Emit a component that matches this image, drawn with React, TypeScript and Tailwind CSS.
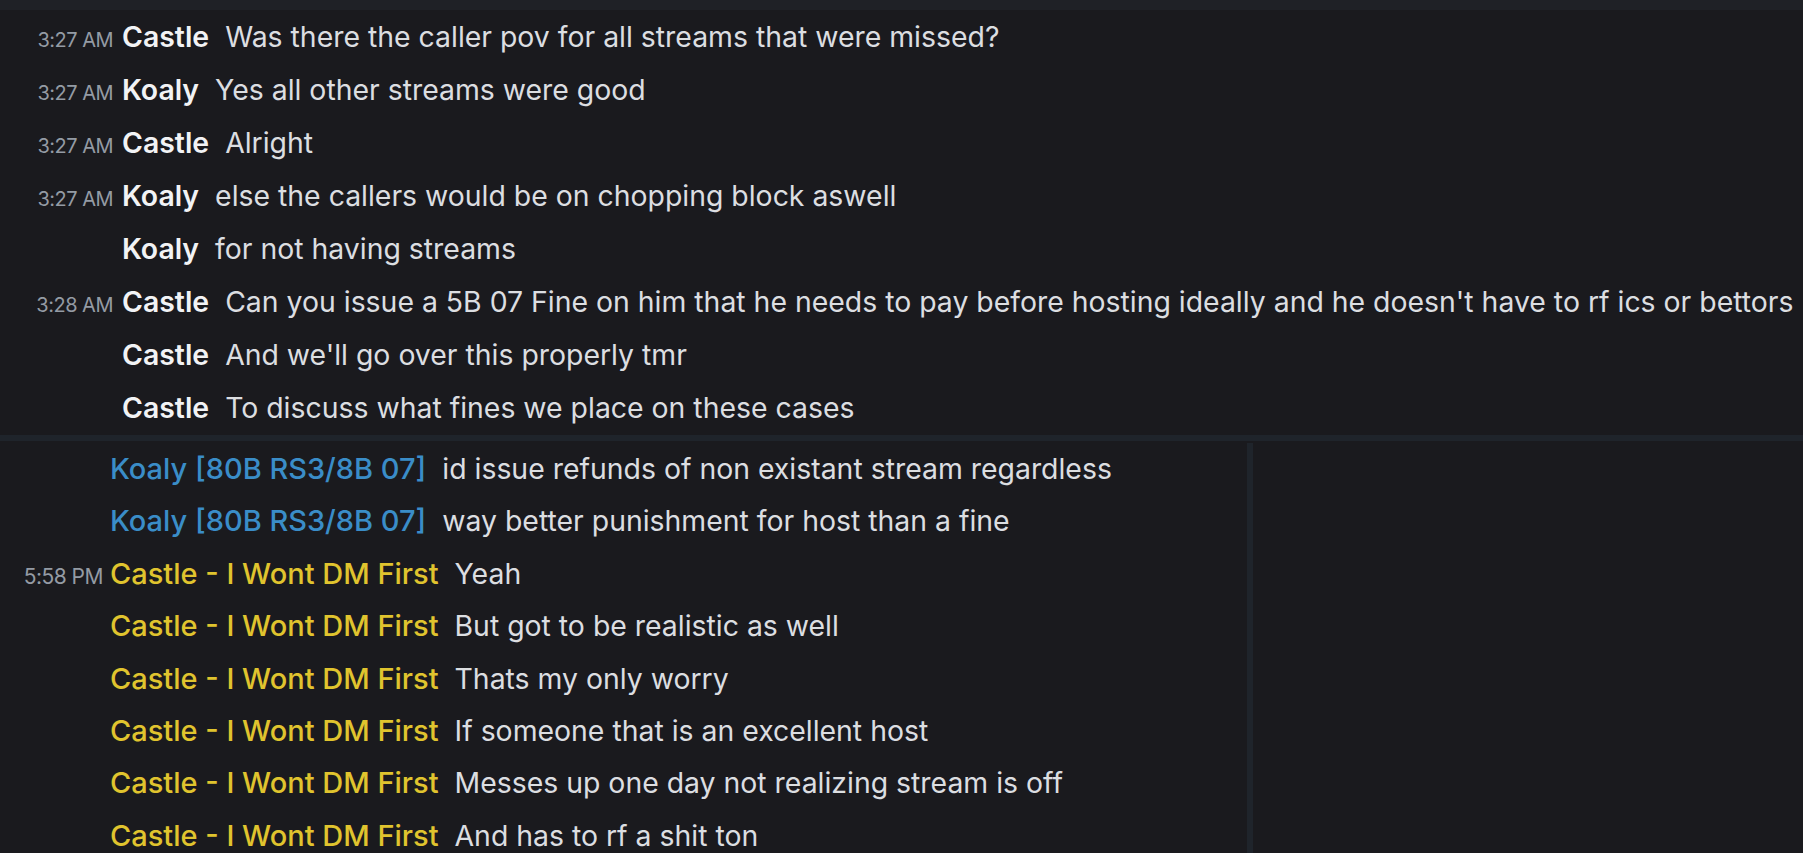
const topRows = [
  { time: "3:27 AM", name: "Castle", text: "Was there the caller pov for all streams that were missed?" },
  { time: "3:27 AM", name: "Koaly", text: "Yes all other streams were good" },
  { time: "3:27 AM", name: "Castle", text: "Alright" },
  { time: "3:27 AM", name: "Koaly", text: "else the callers would be on chopping block aswell" },
  { time: "", name: "Koaly", text: "for not having streams" },
  {
    time: "3:28 AM",
    name: "Castle",
    text: "Can you issue a 5B 07 Fine on him that he needs to pay before hosting ideally and he doesn't have to rf ics or bettors",
  },
  { time: "", name: "Castle", text: "And we'll go over this properly tmr" },
  { time: "", name: "Castle", text: "To discuss what fines we place on these cases" },
];

const castle = "Castle - I Wont DM First";
const koaly = "Koaly [80B RS3/8B 07]";

const bottomRows = [
  { time: "", name: koaly, color: "blue", text: "id issue refunds of non existant stream regardless" },
  { time: "", name: koaly, color: "blue", text: "way better punishment for host than a fine" },
  { time: "5:58 PM", name: castle, color: "gold", text: "Yeah" },
  { time: "", name: castle, color: "gold", text: "But got to be realistic as well" },
  { time: "", name: castle, color: "gold", text: "Thats my only worry" },
  { time: "", name: castle, color: "gold", text: "If someone that is an excellent host" },
  { time: "", name: castle, color: "gold", text: "Messes up one day not realizing stream is off" },
  { time: "", name: castle, color: "gold", text: "And has to rf a shit ton" },
];

export default function App() {
  return (
    <div className="w-full h-[853px] overflow-hidden bg-[#1a1a1e] font-['Inter',sans-serif] whitespace-nowrap">
      {/* hover strip at the very top */}
      <div className="h-[10px] bg-[#1f2126]" />

      {/* first capture */}
      <div className="h-[425px]">
        {topRows.map((row, i) => (
          <div key={i} className="flex items-baseline h-[53px] leading-[53px]">
            <span className="w-[113px] text-right text-[20px] text-[#949ba4] tracking-[-0.5px]">{row.time}</span>
            <span className="ml-[9px] text-[28.4px] font-semibold text-[#f2f3f5]">{row.name}</span>
            <span className="ml-[16px] text-[28.4px] text-[#dcdee1]">{row.text}</span>
          </div>
        ))}
      </div>

      <div className="h-[6px] bg-[#1f242b]" />

      {/* second capture */}
      <div className="flex h-[412px] pt-[2px]">
        <div className="w-[1247px]">
          {bottomRows.map((row, i) => (
            <div key={i} className="flex items-baseline h-[52.4px] leading-[52.4px]">
              <span className="w-[103px] text-right text-[21px] text-[#949ba4] tracking-[-0.5px]">{row.time}</span>
              <span
                className={
                  row.color === "blue"
                    ? "ml-[7px] text-[29px] font-medium text-[#3a8dc8]"
                    : "ml-[7px] text-[29px] font-medium text-[#e0c42e]"
                }
              >
                {row.name}
              </span>
              <span className="ml-[16px] text-[28.4px] text-[#dcdee1]">{row.text}</span>
            </div>
          ))}
        </div>
        <div className="w-[6px] bg-[#1f242b]" />
        <div className="flex-1" />
      </div>
    </div>
  );
}
